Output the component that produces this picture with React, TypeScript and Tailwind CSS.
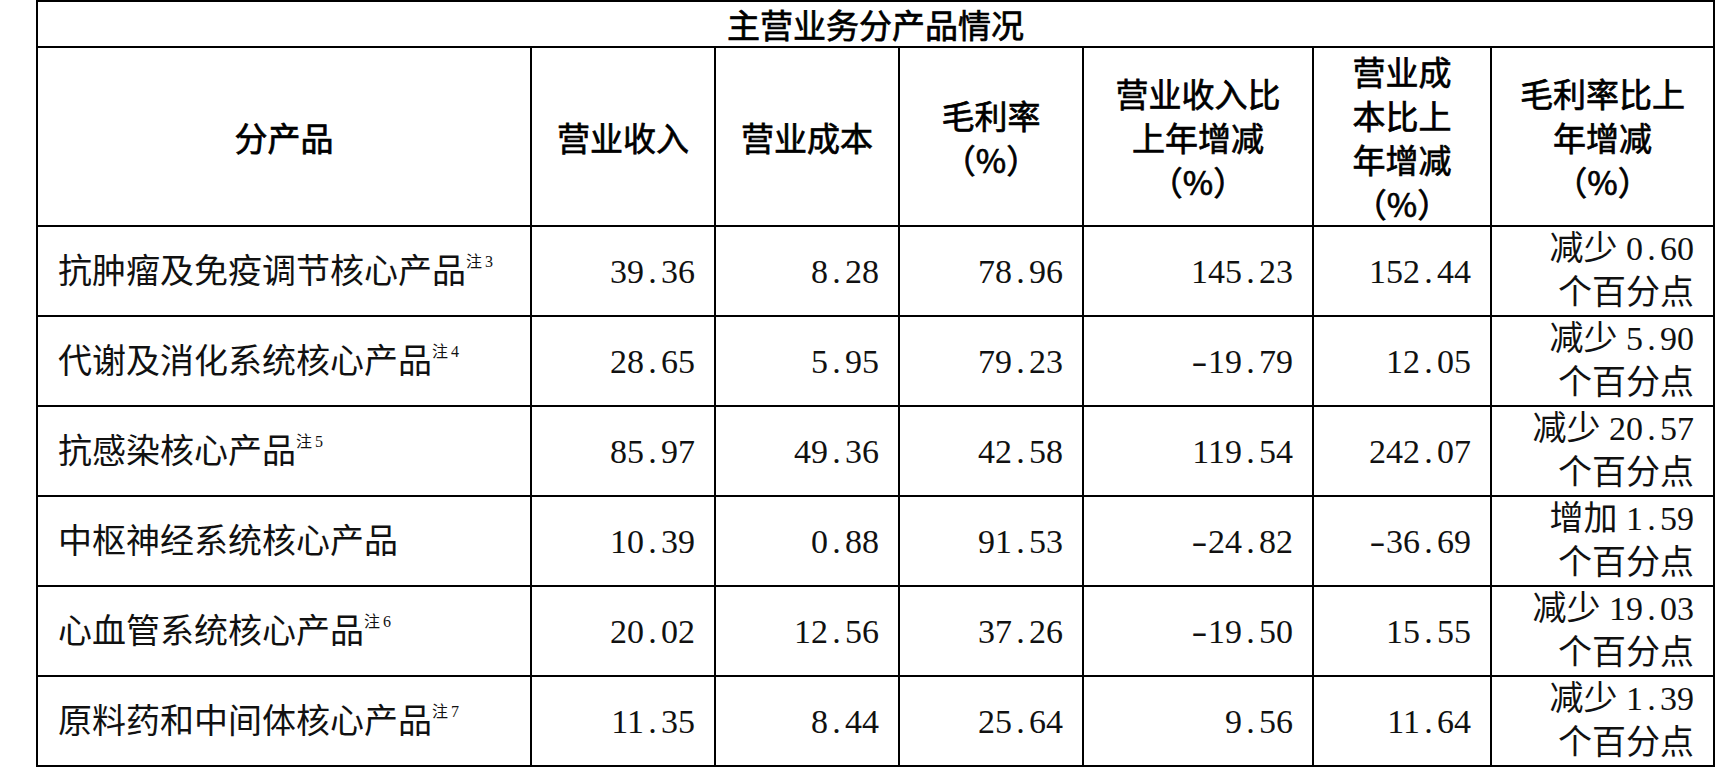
import React from "react";

type Row = {
  name: string;
  note?: string;
  revenue: string;
  cost: string;
  margin: string;
  revChange: string;
  costChange: string;
  marginChange: [string, string];
};

const rows: Row[] = [
  { name: "抗肿瘤及免疫调节核心产品", note: "3", revenue: "39.36", cost: "8.28", margin: "78.96", revChange: "145.23", costChange: "152.44", marginChange: ["减少", "0.60"] },
  { name: "代谢及消化系统核心产品", note: "4", revenue: "28.65", cost: "5.95", margin: "79.23", revChange: "-19.79", costChange: "12.05", marginChange: ["减少", "5.90"] },
  { name: "抗感染核心产品", note: "5", revenue: "85.97", cost: "49.36", margin: "42.58", revChange: "119.54", costChange: "242.07", marginChange: ["减少", "20.57"] },
  { name: "中枢神经系统核心产品", revenue: "10.39", cost: "0.88", margin: "91.53", revChange: "-24.82", costChange: "-36.69", marginChange: ["增加", "1.59"] },
  { name: "心血管系统核心产品", note: "6", revenue: "20.02", cost: "12.56", margin: "37.26", revChange: "-19.50", costChange: "15.55", marginChange: ["减少", "19.03"] },
  { name: "原料药和中间体核心产品", note: "7", revenue: "11.35", cost: "8.44", margin: "25.64", revChange: "9.56", costChange: "11.64", marginChange: ["减少", "1.39"] },
];

// song-style digits: every char half an em, the dot and minus too
const Num: React.FC<{ value: string }> = ({ value }) => {
  const neg = value.startsWith("-");
  const parts = (neg ? value.slice(1) : value).split(".");
  return (
    <span className="whitespace-nowrap">
      {neg && <span className="inline-block w-[0.5em] text-center scale-x-[1.4]">-</span>}
      {parts[0]}
      {parts.length > 1 && <span className="inline-block w-[0.5em] text-center">.</span>}
      {parts[1]}
    </span>
  );
};

const th = "border-2 border-black text-center align-middle font-normal leading-[44px] [-webkit-text-stroke:0.7px_black]";
const td = "border-2 border-black text-right align-middle pr-[19px]";

const App: React.FC = () => {
  return (
    <div className="w-[1722px] h-[770px] bg-white pl-[36px] overflow-hidden">
      <table className="table-fixed border-collapse w-[1677px] text-[34px] text-[#111] font-['Liberation_Serif','Noto_Sans_CJK_SC',serif]">
        <colgroup>
          <col className="w-[494px]" />
          <col className="w-[184px]" />
          <col className="w-[184px]" />
          <col className="w-[184px]" />
          <col className="w-[230px]" />
          <col className="w-[178px]" />
          <col className="w-[223px]" />
        </colgroup>
        <thead className="font-['Noto_Sans_CJK_SC',sans-serif] text-[33px] text-black">
          <tr className="h-[46px]">
            <th colSpan={7} className={th}>主营业务分产品情况</th>
          </tr>
          <tr className="h-[179px]">
            <th className={th}>分产品</th>
            <th className={th}>营业收入</th>
            <th className={th}>营业成本</th>
            <th className={th}>毛利率<br />（%）</th>
            <th className={th}>营业收入比<br />上年增减<br />（%）</th>
            <th className={th}>营业成<br />本比上<br />年增减<br />（%）</th>
            <th className={th}>毛利率比上<br />年增减<br />（%）</th>
          </tr>
        </thead>
        <tbody>
          {rows.map((r) => (
            <tr key={r.name} className="h-[90px]">
              <td className="border-2 border-black align-middle pl-[20px] whitespace-nowrap">
                {r.name}
                {r.note && (
                  <sup className="text-[16px] leading-none align-[0.45em] tracking-[3px]">注{r.note}</sup>
                )}
              </td>
              <td className={td}><Num value={r.revenue} /></td>
              <td className={td}><Num value={r.cost} /></td>
              <td className={td}><Num value={r.margin} /></td>
              <td className={td}><Num value={r.revChange} /></td>
              <td className={td}><Num value={r.costChange} /></td>
              <td className={`${td} leading-[44px]`}>
                {r.marginChange[0]} <Num value={r.marginChange[1]} />
                <br />
                个百分点
              </td>
            </tr>
          ))}
        </tbody>
      </table>
    </div>
  );
};

export default App;
